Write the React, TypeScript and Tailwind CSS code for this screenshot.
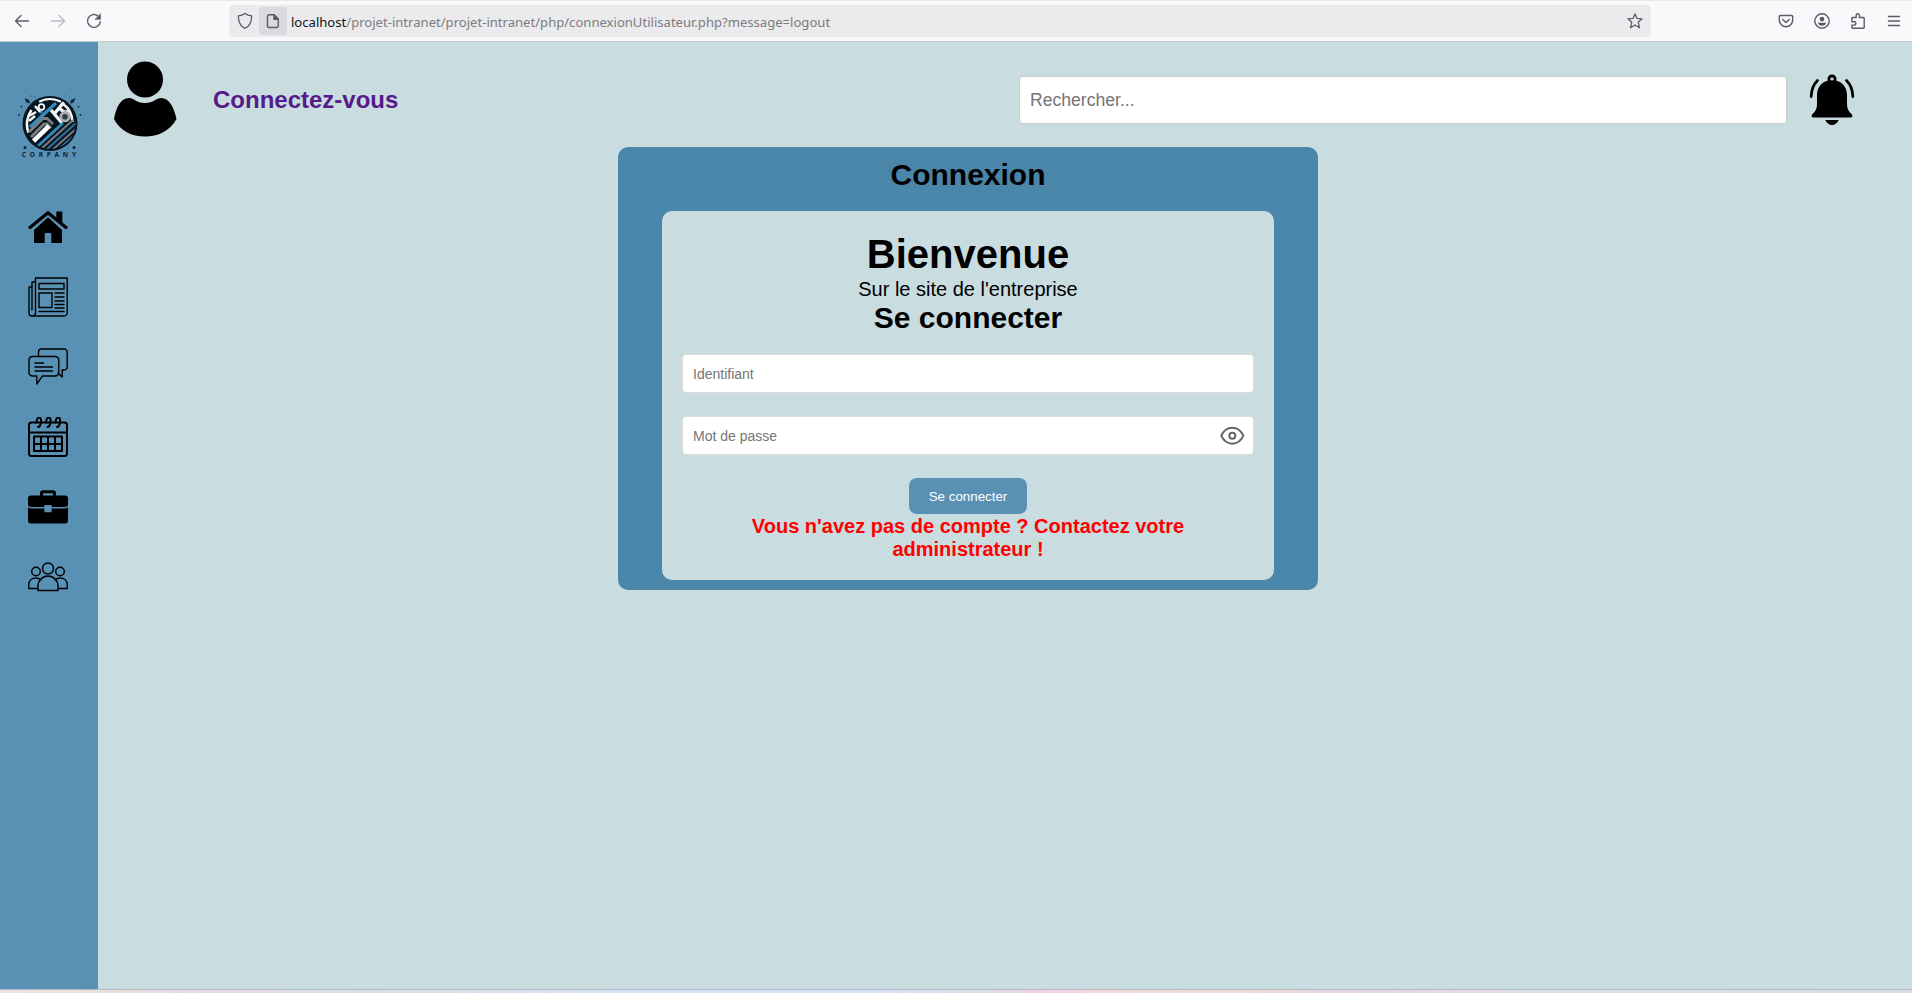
import type { ReactNode } from "react";

function Toolbar() {
  const s = { fill: "none", stroke: "#5b5b66", strokeWidth: 1.4, strokeLinecap: "round" as const, strokeLinejoin: "round" as const };
  return (
    <header className="flex h-[42px] shrink-0 items-center border-t border-b border-t-[#e9e9ec] border-b-[#c6cccc] bg-[#f9f9fb]">
      <div className="flex w-[229px] items-center gap-[20px] pl-[14px]">
        <svg width="16" height="16" viewBox="0 0 16 16" {...s}><path d="M14.5 8H1.5M7 2.5L1.5 8L7 13.5" /></svg>
        <svg width="16" height="16" viewBox="0 0 16 16" {...s} stroke="#bcbcc3"><path d="M1.5 8h13M9 2.5L14.5 8L9 13.5" /></svg>
        <svg width="16" height="16" viewBox="0 0 16 16" {...s}><path d="M14.3 8.6A6.4 6.4 0 1 1 12 3" /><path d="M14.5 1v5.3H9.4z" fill="#5b5b66" strokeWidth=".6" /></svg>
      </div>
      <div className="flex h-[32px] w-[1422px] items-center rounded-[4px] bg-[#ebebed]">
        <div className="flex w-[30px] justify-center pl-[2px]">
          <svg width="16" height="18" viewBox="0 0 16 18" {...s} strokeWidth="1.3"><path d="M8 1.4C6 3 3.500 3.700 1.300 3.800C1.300 9 2.500 14 8 16.400C13.500 14 14.700 9 14.700 3.800C12.500 3.700 10 3 8 1.400z" /></svg>
        </div>
        <div className="flex h-[28px] w-[28px] items-center justify-center rounded-[3px] bg-[#d9d9df]">
          <svg width="14" height="16" viewBox="0 0 14 16" {...s}><path d="M3 1.700h5l4.300 4.300v7a1.500 1.500 0 0 1-1.500 1.500H3A1.500 1.500 0 0 1 1.500 13V3.200A1.500 1.500 0 0 1 3 1.700z" /><path d="M8 1.700v4.500h4.300z" fill="#5b5b66" /></svg>
        </div>
        <div className="ml-[4px] flex-1 pt-[2px] font-['Noto_Sans',sans-serif] text-[13.08px] leading-[18px] text-[#7c7c80]">
          <span className="text-[#15141a]">localhost</span>/projet-intranet/projet-intranet/php/connexionUtilisateur.php?message=logout
        </div>
        <svg className="mr-[8px]" width="16" height="16" viewBox="0 0 16 16" {...s} strokeWidth="1.3"><path d="M8 .9l2 4.500 5.100.4-3.900 3.400 1.300 5.600L8 12l-4.500 2.800 1.300-5.600L.9 5.800 6 5.400z" /></svg>
      </div>
      <div className="ml-auto flex items-center gap-[20px] pr-[11px]">
        <svg width="16" height="16" viewBox="0 0 16 16" {...s} ><path d="M2.500 2.500h11a1.200 1.200 0 0 1 1.200 1.200V7a6.700 6.700 0 0 1-13.400 0V3.700a1.200 1.200 0 0 1 1.200-1.200zM4.700 6.400L8 9.400l3.300-3" /></svg>
        <svg width="16" height="16" viewBox="0 0 16 16" {...s}><circle cx="8" cy="8" r="7.200" /><circle cx="8" cy="6.100" r="2.400" fill="#5b5b66" stroke="none" /><path d="M3.800 9.800h8.400c-.5 2-2 2.900-4.200 2.900s-3.700-.9-4.200-2.900z" fill="#5b5b66" stroke="none" /></svg>
        <svg width="16" height="16" viewBox="0 0 16 16" {...s}><path d="M2.200 4.500h4V2.300a1.600 1.600 0 0 1 3.200 0v2.200h4.100a.7.700 0 0 1 .7.700v9.300a.7.700 0 0 1-.7.700H2.600a.7.700 0 0 1-.7-.7v-2.400h2.300a1.700 1.700 0 0 0 0-3.400H1.900V5z" /></svg>
        <svg className="ml-px" width="14" height="16" viewBox="0 0 14 16" {...s}><path d="M1.500 3.500h11M1.500 8h11M1.500 12.500h11" /></svg>
      </div>
    </header>
  );
}

function Logo() {
  return (
    <svg width="66" height="66" viewBox="0 0 66 66">
      <defs><clipPath id="disc"><circle cx="33" cy="29.500" r="25.500" /></clipPath></defs>
      <circle cx="33" cy="29.500" r="27.500" fill="#07151e" />
      <g clipPath="url(#disc)" fill="none">
        <path d="M11.500 38.500C8.500 31 10 22 14.500 16M22 7.500C29 4 37 4 44 7.500M46 10c6 4 9 10 9.500 18" stroke="#f3f6f7" strokeWidth="2.600" />
        <path d="M13 33L39 9M20 13l5 6" stroke="#3489bd" strokeWidth="3.200" />
        <path d="M12 22l7-4M12 27l6-5M18 12l5 6" stroke="#f3f6f7" strokeWidth="2.400" />
        <circle cx="24.500" cy="13" r="2.800" stroke="#f3f6f7" strokeWidth="1.800" />
        <path d="M34 16l11 13M38 19l9-11M42 14l5 4h6" stroke="#f3f6f7" strokeWidth="3.400" />
        <circle cx="48" cy="22.700" r="4.200" fill="#343c43" stroke="#a9adb0" strokeWidth="2.800" />
        <path d="M12 38L26 24.500h4l6 5.500M14 43l13-13h3l4 4" stroke="#7b7e80" strokeWidth="2.800" />
        <path d="M16.500 47L32 32" stroke="#fff" strokeWidth="4.600" />
        <path d="M21 52L46 29" stroke="#3489bd" strokeWidth="2.800" />
        <path d="M24 55L56 26" stroke="#777b7e" strokeWidth="2.200" />
        <path d="M28 57L59 29" stroke="#2d6d99" strokeWidth="2.200" />
        <path d="M33 58L60 34" stroke="#777b7e" strokeWidth="2" />
        <path d="M39 58L60 39" stroke="#3489bd" strokeWidth="2.200" />
      </g>
      <g fill="#102331">
        <path d="M7.500 4l4.500 2 1 3.500-3.500-1zM58.500 4L54 6l-1 3.500 3.500-1z" />
        <circle cx="8" cy="53.500" r="1.500" /><circle cx="57" cy="53.500" r="1.500" />
        <circle cx="4.500" cy="12.700" r=".9" /><circle cx="61.500" cy="12.700" r=".9" /><circle cx="2" cy="20.800" r=".9" /><circle cx="63.500" cy="20.800" r=".9" />
      </g>
      <path d="M13 2h2M17 3h1.500M47.500 2h2M52 3h1.500M14 54h2M50 54h2" stroke="#347ba7" strokeWidth="1.300" />
      <text x="4.700" y="63.400" textLength="54.500" fontFamily="Noto Sans, sans-serif" fontSize="6.600" fontWeight="700" fill="#12232e">CORPANY</text>
    </svg>
  );
}

const ink = { fill: "none", stroke: "#000", strokeWidth: 1.4, strokeLinejoin: "round" as const, strokeLinecap: "round" as const };

const navIcons: ReactNode[] = [
  <svg key="home" width="40" height="40" viewBox="0 0 40 40"><path d="M28.300 4.500h6v12l-6-6z" /><path d="M20 10.200L34 23v12.200a.8.800 0 0 1-.8.800H23.300V26h-6.600v10H6.800a.8.800 0 0 1-.8-.8V23z" /><path d="M2 20.500L20 5.700l18 14.800" fill="none" stroke="#000" strokeWidth="3.200" strokeLinecap="round" strokeLinejoin="round" /><path d="M5 21.800L20 9.200l15 12.600" fill="none" stroke="#5991b5" strokeWidth=".8" /></svg>,
  <svg key="news" width="40" height="40" viewBox="0 0 40 40" {...ink}><path d="M7.500 1h31.700v35a3 3 0 0 1-3 3H4a3 3 0 0 1-3-3V10h3M7.500 1v34.500a3 3 0 0 1-3.500 3.300M4 33V5h3.500M11 6.500h25V12H11zM11 16h13v14.500H11zM27 16h9M27 20h9M27 24h9M27 27.500h9M27 31h9M11 34.500h25M7.500 20v3" /></svg>,
  <svg key="chat" width="40" height="40" viewBox="0 0 40 40" {...ink}><path d="M4.500 9.500h22.800a3.500 3.500 0 0 1 3.500 3.500v12.500a3.500 3.500 0 0 1-3.500 3.500H14.500L8.800 37v-8H4.500A3.500 3.500 0 0 1 1 25.500V13a3.500 3.500 0 0 1 3.500-3.500zM10.500 9V5a3 3 0 0 1 3-3h22.700a3 3 0 0 1 3 3v15a3 3 0 0 1-3 3h-2v7L30 26M7 16h8.500M7 20h17.500M7 24h17.500" /></svg>,
  <svg key="calendar" width="40" height="40" viewBox="0 0 40 40" {...ink} strokeWidth="2"><rect x="1" y="5.500" width="38" height="33.500" rx="2.500" /><path d="M1 15.500h38M6 19.500h28V34H6zM13 19.500V34M20 19.500V34M27 19.500V34M6 27h28" /><path d="M8.500 5.500C9-1 14-1 13 5c-.4 3-1.600 5-3 5M18 5.500C18.500-1 23.500-1 22.500 5c-.4 3-1.600 5-3 5M27.500 5.500C28-1 33-1 32 5c-.4 3-1.600 5-3 5" /></svg>,
  <svg key="briefcase" width="40" height="40" viewBox="0 0 40 40"><path d="M12 8.500V6.200a3 3 0 0 1 3-3h10a3 3 0 0 1 3 3v2.300h9a3 3 0 0 1 3 3V17a3 3 0 0 1-3 3H23.500v-1.800h-7V20H3a3 3 0 0 1-3-3v-5.500a3 3 0 0 1 3-3zM0 20.500l3 1h13.500v3.700h7v-3.700H37l3-1v13a3 3 0 0 1-3 3H3a3 3 0 0 1-3-3z" /><path d="M15 6.200h10v2.300H15zM16.700 18.300h6.600v6.400h-6.600z" fill="#5991b5" /></svg>,
  <svg key="team" width="40" height="40" viewBox="0 0 40 40" {...ink}><circle cx="20" cy="11.500" r="5.500" /><circle cx="8" cy="14.500" r="4.300" /><circle cx="32" cy="14.500" r="4.300" /><path d="M10 33.500v-4.500a10 10 0 0 1 20 0V33.500zM9.500 31.500H.8v-4c0-4 3-6.500 7.200-6.500 2 0 3.800.8 5 1.800M30.500 31.500h8.700v-4c0-4-3-6.500-7.200-6.500-2 0-3.800.8-5 1.800" /></svg>,
];

function Sidebar() {
  return (
    <nav className="flex w-[98px] shrink-0 flex-col bg-[#5991b5] pt-[52px] pl-[17px]">
      <Logo />
      <div className="mt-[47px] ml-[11px] flex flex-col gap-[30px]">
        {navIcons.map((icon, i) => <a key={i} className="block h-[40px] w-[40px] [&>svg]:block">{icon}</a>)}
      </div>
    </nav>
  );
}

function TopBar() {
  return (
    <div className="flex h-[105px] items-center">
      <svg className="mt-[9px] ml-[16px]" width="63" height="76" viewBox="0 0 63 76"><circle cx="31" cy="18.500" r="18" /><path d="M0 58C2 46 7 37 15 37c5 0 7 5 16 5s11-5 16-5c8 0 13 9 15.500 21C56 70 44 75.500 31 75.500S6 70 0 58z" /></svg>
      <a className="mt-[11px] ml-[36px] text-[24px] leading-[28px] font-bold text-[#551a8b]">Connectez-vous</a>
      <input className="mt-[11px] ml-auto h-[48px] w-[768px] rounded-[4px] border border-[#ccc] bg-white px-[10px] text-[17.600px] outline-none placeholder:text-[#757575]" placeholder="Rechercher..." />
      <svg className="mt-[11px] mr-[57px] ml-[22px]" width="46" height="52" viewBox="0 0 46 52"><circle cx="23" cy="5" r="3" fill="none" stroke="#000" strokeWidth="3" /><path d="M23 6c9 0 15 6.500 15 15v9c0 5 2 8 5 10.500 1 1.800 0 3-1.500 3h-37C3 43.500 2 42.300 3 40.500 6 38 8 35 8 30v-9C8 12.500 14 6 23 6zM16.300 46h13.400c-1.500 3.500-4 5-6.700 5s-5.200-1.500-6.700-5z" /><circle cx="23" cy="5" r="1.500" fill="#c9dce0" /><path d="M8.500 6.500C4 11 2.300 16.500 2.200 22.500M37.500 6.500C42 11 43.700 16.500 43.800 22.500" fill="none" stroke="#000" strokeWidth="2.800" strokeLinecap="round" /></svg>
    </div>
  );
}

const field = "block h-[39px] w-full rounded-[4px] border border-[#ddd] bg-white px-[10px] text-[14px] outline-none placeholder:text-[#757575]";

function LoginCard() {
  return (
    <section className="ml-[520px] flex h-[443px] w-[700px] flex-col items-center rounded-[10px] bg-[#4a86a9] pt-[11px]">
      <h2 className="text-[30px] leading-[34px] font-bold">Connexion</h2>
      <form className="mt-[19px] flex h-[369px] w-[612px] flex-col items-center rounded-[10px] bg-[#c9dce0] px-[20px] pt-[20px] text-center">
        <h1 className="text-[40px] leading-[46px] font-bold">Bienvenue</h1>
        <p className="mt-px text-[20px] leading-[23px]">Sur le site de l'entreprise</p>
        <h2 className="text-[30px] leading-[34px] font-bold">Se connecter</h2>
        <input className={field + " mt-[19px]"} placeholder="Identifiant" />
        <div className="relative mt-[23px] w-full">
          <input type="password" className={field} placeholder="Mot de passe" />
          <svg className="absolute top-[7px] right-[9px]" width="25" height="25" viewBox="0 0 25 25" fill="none" stroke="#666" strokeWidth="2"><path d="M1.300 12.700C3.800 7 7.500 4.700 12.300 4.700S20.800 7 23.300 12.700C20.800 18.400 17.100 20.700 12.300 20.700S3.800 18.400 1.300 12.700z" strokeLinejoin="round" /><circle cx="12.300" cy="12.700" r="3" /></svg>
        </div>
        <button type="button" className="mt-[23px] h-[36px] w-[118px] shrink-0 rounded-[8px] bg-[#5991b5] pt-[2px] text-[13.333px] text-white">Se connecter</button>
        <p className="mt-px w-[460px] text-[20px] leading-[23px] font-bold text-[#f00]">Vous n'avez pas de compte ? Contactez votre administrateur !</p>
      </form>
    </section>
  );
}

export default function App() {
  return (
    <div className="flex h-[993px] w-[1912px] flex-col overflow-hidden bg-[#c9dce0] font-['Liberation_Sans',sans-serif] text-black">
      <Toolbar />
      <div className="flex min-h-0 flex-1">
        <Sidebar />
        <main className="flex-1"><TopBar /><LoginCard /></main>
      </div>
      <div className="h-[4px] shrink-0 border-t border-[#b5b9c8] bg-[linear-gradient(90deg,#e9e4e0_0%,#e9dfda_6%,#e2dae8_9%,#dbdce8_20%,#d3e3f2_33%,#d3e3f2_45%,#dcdbe9_52%,#edd3e0_54%,#f0dcda_61%,#e8d5dc_70%,#dddde6_80%,#d8dbe6_100%)]" />
    </div>
  );
}
